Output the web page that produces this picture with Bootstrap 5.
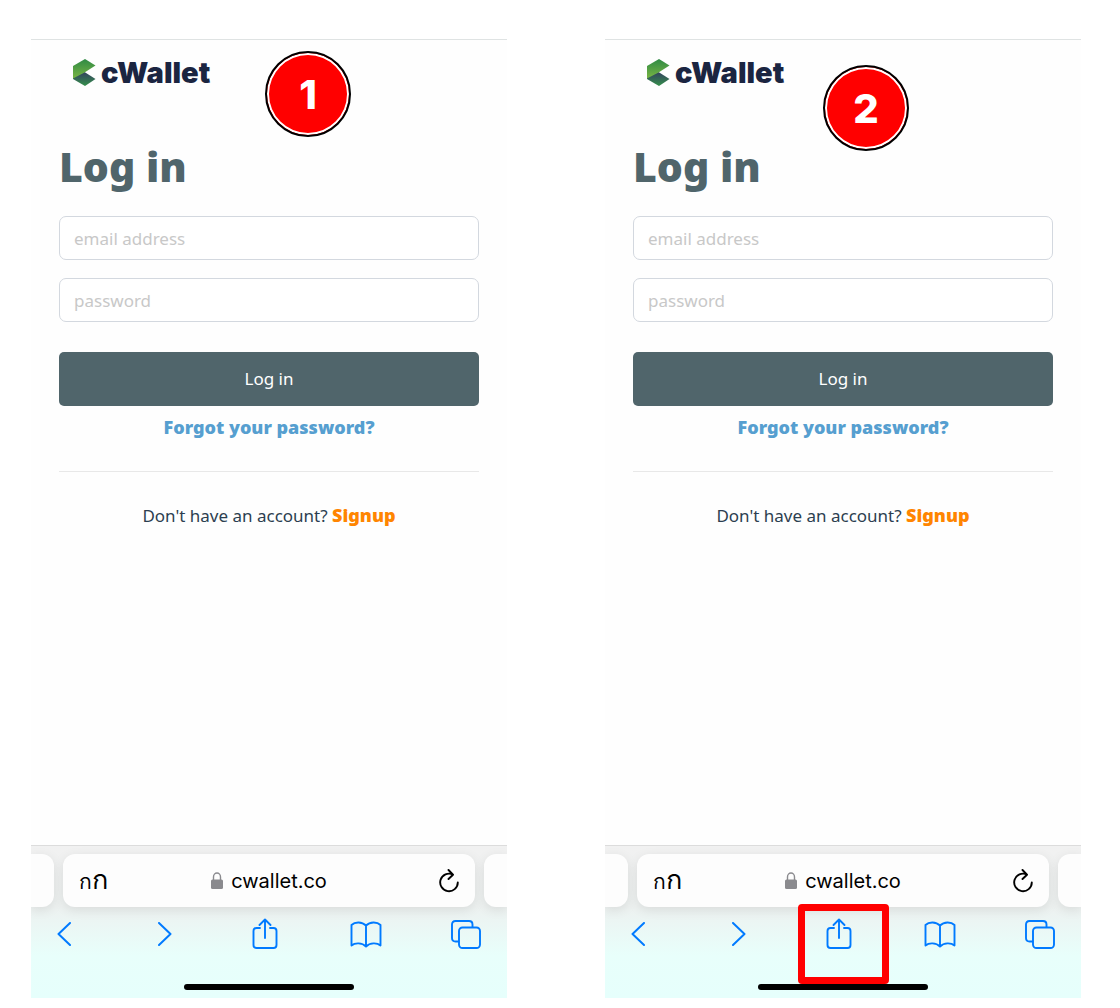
<!DOCTYPE html>
<html lang="en">
<head>
<meta charset="utf-8">
<meta name="viewport" content="width=device-width, initial-scale=1">
<title>cWallet – Log in</title>
<link href="https://cdn.jsdelivr.net/npm/bootstrap@5.3.0/dist/css/bootstrap.min.css" rel="stylesheet">
<style>
body { font-family: "Noto Sans", "Open Sans", sans-serif; background: #fff; color: #2c3e50; }
.steps { min-height: 100vh; gap: 98px; padding: 39px 39px 10px 31px; }
.phone { flex: 1 1 0; min-width: 0; background: #fefefe; border-top: 1px solid #dfe3e3; }
.brand-link { font: 900 29px/28px Inter, sans-serif; color: #1b2541; gap: 5px; padding: 19px 0 0 14px; }
.login-area { padding: 0 28px; }
.login-title { font: 900 41px/48px "Noto Sans", sans-serif; color: #50656b; margin: 55px 0 26px; }
.field { height: 44px; border: 1px solid #d3d8df; border-radius: 7px; padding: 0 14px; font-size: 17px; background: #fff; margin-bottom: 18px; }
.field::placeholder { color: #c8c8c8; }
.login-btn, .login-btn:hover { height: 54px; margin-top: 12px; background: #50656b; color: #fff; border: 0; border-radius: 5px; font-size: 17px; }
.forgot { font-size: 18px; line-height: 24px; font-weight: 900; color: #569fd0; margin-top: 9px; }
.divider { border-top: 1px solid #e8e8e8; margin: 32px 0 30px; }
.account { font-size: 17px; line-height: 26px; }
.account a { color: #ff8500; font-size: 18px; font-weight: 900; }
.browser-bar { height: 153px; border-top: 1px solid #dcdcdc; background: linear-gradient(#f1f1f1, #edf1f0 40%, #e8fffb 72%, #e6fffc); overflow-x: clip; }
.tabs-row { gap: 9px; padding-top: 8px; }
.tab-edge, .address { height: 53px; background: #fdfdfd; box-shadow: 0 3px 12px rgba(0,0,0,.09); }
.tab-edge { width: 23px; }
.edge-l { border-radius: 0 12px 12px 0; }
.edge-r { border-radius: 12px 0 0 12px; }
.address { border-radius: 12px; padding: 0 16px; color: #000; font: 20px/28px Inter, sans-serif; }
.address button, .tools button { background: none; border: 0; padding: 0; color: inherit; }
.address button { width: 28px; white-space: nowrap; }
.thai-small { font-size: 21px; }
.thai-big { font-size: 27px; }
.tools { padding: 10px 25px 0 17px; color: #007aff; }
.tools button { width: 32px; height: 34px; }
.home-line { width: 170px; height: 6px; border-radius: 3px; background: #000; margin: 33px auto 0; }
.step-no { width: 86px; height: 86px; border: 2px solid #000; border-radius: 50%; background: #f00; box-shadow: inset 0 0 0 2px #fff; color: #fff; font: 800 40px/84px Inter, sans-serif; text-align: center; }
.step-one { left: 234px; top: 11px; }
.step-two { left: 218px; top: 25px; }
.highlight { left: -25px; top: -13px; width: 91px; height: 80px; border: 7px solid #f00; border-radius: 4px; pointer-events: none; z-index: 2; }
svg { display: block; }
.tools svg { margin: auto; }
</style>
</head>
<body>
<svg width="0" height="0" class="position-absolute" aria-hidden="true">
  <defs>
    <linearGradient id="gTop" x1="0" y1="0" x2="0" y2="1"><stop stop-color="#2f8a45"/><stop offset="1" stop-color="#79b543"/></linearGradient>
    <linearGradient id="gBottom" x1="0" y1="0" x2="0" y2="1"><stop stop-color="#33415f"/><stop offset="1" stop-color="#35904a"/></linearGradient>
    <symbol id="i-logo" viewBox="0 0 23 28"><path d="M11.500 13 22.500 20 12 27 0 20V18.500Z" fill="url(#gBottom)"/><path d="M12 0 22.500 6.500 11.500 13.500 0 19.500V7Z" fill="url(#gTop)"/></symbol>
    <symbol id="i-back" viewBox="0 0 14 24"><path d="M13 1 1.500 12 13 23" fill="none" stroke="currentColor" stroke-width="2" stroke-linecap="round" stroke-linejoin="round"/></symbol>
    <symbol id="i-next" viewBox="0 0 14 24"><path d="M1 1 12.500 12 1 23" fill="none" stroke="currentColor" stroke-width="2" stroke-linecap="round" stroke-linejoin="round"/></symbol>
    <symbol id="i-share" viewBox="0 0 26 32"><path d="M8 10H4.500Q1.500 10 1.500 13v14q0 3 3 3h17q3 0 3-3V13q0-3-3-3H18M13 20V1.500M7.500 7 13 1.500 18.500 7" fill="none" stroke="currentColor" stroke-width="1.900" stroke-linecap="round" stroke-linejoin="round"/></symbol>
    <symbol id="i-book" viewBox="0 0 32 27"><path d="M16 25.500V4.500C12 .5 5 .5 1.500 4v20.500C5 21.500 12 21.500 16 25.500 20 21.500 27 21.500 30.500 24.500V4C27 .5 20 .5 16 4.500" fill="none" stroke="currentColor" stroke-width="1.900" stroke-linejoin="round"/></symbol>
    <symbol id="i-tabs" viewBox="0 0 30 29"><path d="M8 21.500H4.500q-3.500 0-3.500-3.500V4.500Q1 1 4.500 1H18q3.500 0 3.500 3.500V7" fill="none" stroke="currentColor" stroke-width="1.900"/><rect x="8" y="7.500" width="21" height="20.500" rx="3.500" fill="none" stroke="currentColor" stroke-width="1.900"/></symbol>
    <symbol id="i-lock" viewBox="0 0 12 17"><rect y="7.500" width="12" height="9.500" rx="1.500" fill="#8a8a8e"/><path d="M2.500 8.500V5a3.500 4 0 0 1 7 0v3.500" fill="none" stroke="#8a8a8e" stroke-width="1.400"/></symbol>
    <symbol id="i-reload" viewBox="0 0 20 24"><path d="M18.800 13.500A8.800 8.800 0 1 1 13.800 5.500M9.500 1 14 5.700 9.500 10" fill="none" stroke="currentColor" stroke-width="1.900" stroke-linecap="round" stroke-linejoin="round"/></symbol>
  </defs>
</svg>
<main class="steps d-flex">
  <section class="phone position-relative d-flex flex-column">
    <div class="step-no step-one position-absolute">1</div>
    <div class="login-area">
      <a href="#" class="brand-link d-flex align-items-center text-decoration-none"><svg width="23" height="28" aria-hidden="true"><use href="#i-logo"/></svg>cWallet</a>
      <h1 class="login-title">Log in</h1>
      <form>
        <input class="form-control field" type="email" placeholder="email address" aria-label="email address">
        <input class="form-control field" type="password" placeholder="password" aria-label="password">
        <button class="btn login-btn w-100" type="button">Log in</button>
      </form>
      <div class="forgot text-center"><a href="#" class="text-reset text-decoration-none">Forgot your password?</a></div>
      <div class="divider"></div>
      <div class="account text-center">Don't have an account? <a href="#" class="text-decoration-none">Signup</a></div>
    </div>
    <div class="browser-bar mt-auto">
      <div class="tabs-row d-flex">
        <div class="tab-edge edge-l"></div>
        <div class="address flex-fill d-flex align-items-center justify-content-between">
          <button type="button" aria-label="Page settings"><span class="thai-small">ก</span><span class="thai-big">ก</span></button>
          <span class="d-flex align-items-center gap-2"><svg width="12" height="17" aria-hidden="true"><use href="#i-lock"/></svg>cwallet.co</span>
          <button type="button" aria-label="Reload"><svg class="ms-auto" width="20" height="24"><use href="#i-reload"/></svg></button>
        </div>
        <div class="tab-edge edge-r"></div>
      </div>
      <div class="tools d-flex justify-content-between">
        <button type="button" aria-label="Back"><svg width="14" height="24"><use href="#i-back"/></svg></button>
        <button type="button" aria-label="Forward"><svg width="14" height="24"><use href="#i-next"/></svg></button>
        <button type="button" aria-label="Share"><svg width="26" height="32"><use href="#i-share"/></svg></button>
        <button type="button" aria-label="Bookmarks"><svg width="32" height="27"><use href="#i-book"/></svg></button>
        <button type="button" aria-label="Tabs"><svg width="30" height="29"><use href="#i-tabs"/></svg></button>
      </div>
      <div class="home-line"></div>
    </div>
  </section>
  <section class="phone position-relative d-flex flex-column">
    <div class="step-no step-two position-absolute">2</div>
    <div class="login-area">
      <a href="#" class="brand-link d-flex align-items-center text-decoration-none"><svg width="23" height="28" aria-hidden="true"><use href="#i-logo"/></svg>cWallet</a>
      <h1 class="login-title">Log in</h1>
      <form>
        <input class="form-control field" type="email" placeholder="email address" aria-label="email address">
        <input class="form-control field" type="password" placeholder="password" aria-label="password">
        <button class="btn login-btn w-100" type="button">Log in</button>
      </form>
      <div class="forgot text-center"><a href="#" class="text-reset text-decoration-none">Forgot your password?</a></div>
      <div class="divider"></div>
      <div class="account text-center">Don't have an account? <a href="#" class="text-decoration-none">Signup</a></div>
    </div>
    <div class="browser-bar mt-auto">
      <div class="tabs-row d-flex">
        <div class="tab-edge edge-l"></div>
        <div class="address flex-fill d-flex align-items-center justify-content-between">
          <button type="button" aria-label="Page settings"><span class="thai-small">ก</span><span class="thai-big">ก</span></button>
          <span class="d-flex align-items-center gap-2"><svg width="12" height="17" aria-hidden="true"><use href="#i-lock"/></svg>cwallet.co</span>
          <button type="button" aria-label="Reload"><svg class="ms-auto" width="20" height="24"><use href="#i-reload"/></svg></button>
        </div>
        <div class="tab-edge edge-r"></div>
      </div>
      <div class="tools d-flex justify-content-between">
        <button type="button" aria-label="Back"><svg width="14" height="24"><use href="#i-back"/></svg></button>
        <button type="button" aria-label="Forward"><svg width="14" height="24"><use href="#i-next"/></svg></button>
        <button type="button" aria-label="Share" class="position-relative"><svg width="26" height="32"><use href="#i-share"/></svg><span class="highlight position-absolute"></span></button>
        <button type="button" aria-label="Bookmarks"><svg width="32" height="27"><use href="#i-book"/></svg></button>
        <button type="button" aria-label="Tabs"><svg width="30" height="29"><use href="#i-tabs"/></svg></button>
      </div>
      <div class="home-line"></div>
    </div>
  </section>
</main>
<script src="https://cdn.jsdelivr.net/npm/bootstrap@5.3.0/dist/js/bootstrap.bundle.min.js"></script>
</body>
</html>
